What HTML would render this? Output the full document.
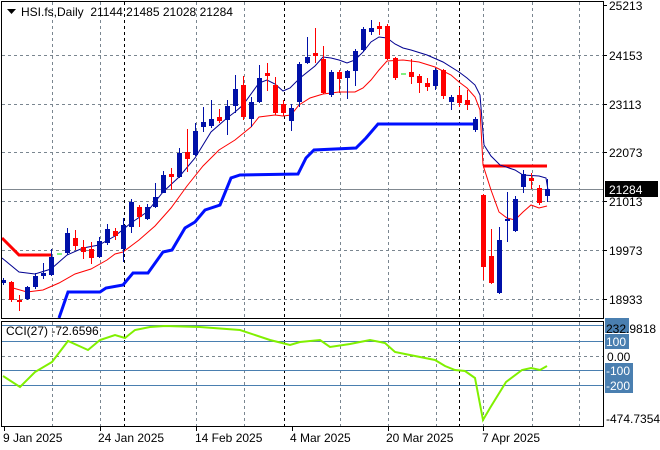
<!DOCTYPE html>
<html><head><meta charset="utf-8"><style>
html,body{margin:0;padding:0;background:#fff;width:660px;height:450px;overflow:hidden}
svg{display:block;font-family:"Liberation Sans",sans-serif}
</style></head><body>
<svg width="660" height="450" viewBox="0 0 660 450" xmlns="http://www.w3.org/2000/svg">
<g stroke="#7a8690" stroke-width="1" stroke-dasharray="3,3" fill="none">
<path d="M2 55.5H603M2 104.5H603M2 152.5H603M2 201.5H603M2 250.5H603M2 299.5H603"/>
<path d="M52.5 2V318M100.5 2V318M196.5 2V318M244.5 2V318M340.5 2V318M388.5 2V318M436.5 2V318M483.5 2V318M532.5 2V318M579.5 2V318"/>
<path d="M52.5 322V426M100.5 322V426M196.5 322V426M244.5 322V426M340.5 322V426M388.5 322V426M436.5 322V426M483.5 322V426M532.5 322V426M579.5 322V426"/>
<path d="M2 356.5H603"/>
</g>
<g stroke="#000" stroke-dasharray="3,3"><path d="M124.5 2V318M284.5 2V318M459.5 2V318M124.5 322V426M284.5 322V426M459.5 322V426"/></g>
<path d="M2 189.5H604" stroke="#808890"/>
<polyline fill="none" stroke="#ff0000" stroke-width="3" points="2,238 19,255 51,255"/>
<polyline fill="none" stroke="#ff0000" stroke-width="3" points="483,166 547,166"/>
<polyline fill="none" stroke="#0010ff" stroke-width="3" points="59,318 68,292 100,292 106,288 123,285 133,273 148,273 163,252 172,250 185,228 195,222 205,210 220,205 231,178 240,175 298,174 306,158 314,150 356,148 366,138 378,124 475,124"/>
<path d="M57 254H62M401 74H406" stroke="#00e000"/>
<polyline fill="none" stroke="#000090" stroke-width="1" points="2,258 19,272 35,274 51,269 67,255 83,248 99,245 115,236 131,223 147,212 163,192 179,177 195,158 211,132 227,118 235,112 243,105 259,83 267,80 275,84 283,91 290,88 300,78 315,66 323,57 331,58 339,60 347,63 355,60 363,52 371,42 379,37 387,38 395,44 403,48 411,50 427,55 443,62 459,72 467,78 475,85 480,95 484,145 491,156 500,165 515,170 523,175 539,176 546,178 548,190"/>
<polyline fill="none" stroke="#ff0000" stroke-width="1" points="13,288 27,292 43,290 59,283 75,274 91,269 107,260 115,254 123,252 139,240 155,226 171,208 187,186 203,166 219,150 235,140 251,127 259,117 275,115 283,116 291,115 299,105 310,98 323,94 339,92 355,92 363,88 371,80 379,70 387,61 403,60 419,62 435,67 451,75 459,82 467,88 475,97 480,110 483,165 491,190 499,212 507,218 515,220 523,212 531,205 539,208 547,206"/>
<g fill="#0010a8" stroke="#0010a8">
<path fill="none" d="M3.5 278V285M27.5 286V300M35.5 273V289M43.5 263V279M51.5 249V276M67.5 228V255M99.5 237V258M107.5 224V245M123.5 218V262M131.5 199V233M147.5 204V220M155.5 183V208M163.5 171V193M179.5 148V178M195.5 123V156M203.5 107V132M211.5 100V128M227.5 100V135M235.5 75V113M251.5 97V127M259.5 65V103M291.5 104V131M299.5 62V107M307.5 37V64M331.5 70V97M347.5 70V99M355.5 49V86M363.5 27V52M371.5 20V35M435.5 68V90M451.5 95V110M475.5 117V132M499.5 227V294M507.5 192V242M515.5 196V232M523.5 170V193M547.5 179V202"/>
<g stroke="none">
<rect x="1" y="280" width="5" height="3"/><rect x="25" y="287" width="5" height="12"/><rect x="33" y="276" width="5" height="11"/><rect x="41" y="273" width="5" height="3"/><rect x="49" y="257" width="5" height="18"/><rect x="65" y="233" width="5" height="20"/><rect x="97" y="241" width="5" height="16"/><rect x="105" y="229" width="5" height="14"/><rect x="121" y="225" width="5" height="24"/><rect x="129" y="202" width="5" height="25"/><rect x="145" y="207" width="5" height="12"/><rect x="153" y="197" width="5" height="10"/><rect x="161" y="175" width="5" height="18"/><rect x="177" y="153" width="5" height="24"/><rect x="193" y="131" width="5" height="24"/><rect x="201" y="122" width="5" height="5"/><rect x="209" y="119" width="5" height="7"/><rect x="225" y="106" width="5" height="14"/><rect x="233" y="89" width="5" height="17"/><rect x="249" y="102" width="5" height="17"/><rect x="257" y="78" width="5" height="24"/><rect x="289" y="108" width="5" height="13"/><rect x="297" y="64" width="5" height="38"/><rect x="305" y="57" width="5" height="6"/><rect x="329" y="72" width="5" height="23"/><rect x="345" y="71" width="5" height="7"/><rect x="353" y="51" width="5" height="20"/><rect x="361" y="29" width="5" height="21"/><rect x="369" y="28" width="5" height="4"/><rect x="433" y="70" width="5" height="16"/><rect x="449" y="97" width="5" height="5"/><rect x="473" y="119" width="5" height="11"/><rect x="497" y="240" width="5" height="53"/><rect x="505" y="219" width="5" height="2"/><rect x="513" y="199" width="5" height="32"/><rect x="521" y="174" width="5" height="13"/><rect x="545" y="189" width="5" height="7"/>
</g></g>
<g fill="#ff0000" stroke="#ff0000">
<path fill="none" d="M11.5 281V302M19.5 295V311M75.5 230V250M83.5 240V259M91.5 242V264M115.5 228V240M139.5 205V227M171.5 168V190M187.5 129V172M219.5 109V123M243.5 76V120M267.5 63V91M275.5 77V115M283.5 100V116M315.5 28V63M323.5 46V94M339.5 70V93M379.5 22V35M387.5 24V60M395.5 57V80M411.5 59V84M419.5 74V93M427.5 78V91M443.5 69V99M459.5 87V107M467.5 90V110M483.5 194V280M491.5 229V284M531.5 173V189M539.5 185V205"/>
<g stroke="none">
<rect x="9" y="282" width="5" height="18"/><rect x="17" y="300" width="5" height="2"/><rect x="73" y="238" width="5" height="8"/><rect x="81" y="247" width="5" height="5"/><rect x="89" y="249" width="5" height="9"/><rect x="113" y="231" width="5" height="5"/><rect x="137" y="207" width="5" height="10"/><rect x="169" y="174" width="5" height="3"/><rect x="185" y="152" width="5" height="7"/><rect x="217" y="117" width="5" height="4"/><rect x="241" y="85" width="5" height="32"/><rect x="265" y="73" width="5" height="3"/><rect x="273" y="85" width="5" height="28"/><rect x="281" y="104" width="5" height="9"/><rect x="313" y="53" width="5" height="3"/><rect x="321" y="59" width="5" height="34"/><rect x="337" y="72" width="5" height="7"/><rect x="377" y="26" width="5" height="3"/><rect x="385" y="26" width="5" height="33"/><rect x="393" y="58" width="5" height="20"/><rect x="409" y="72" width="5" height="5"/><rect x="417" y="76" width="5" height="7"/><rect x="425" y="83" width="5" height="4"/><rect x="441" y="70" width="5" height="26"/><rect x="457" y="95" width="5" height="8"/><rect x="465" y="100" width="5" height="5"/><rect x="481" y="195" width="5" height="72"/><rect x="489" y="256" width="5" height="27"/><rect x="529" y="178" width="5" height="3"/><rect x="537" y="188" width="5" height="15"/>
</g></g>
<path d="M2 325.5H603M2 341.5H603M2 370.5H603M2 385.5H603" stroke="#4a7fb0"/>
<polyline fill="none" stroke="#80f000" stroke-width="2" points="3,376 20,387 35,372 52,362 68,341 88,350 100,340 115,335 125,338 135,330 150,327 165,326 200,327 240,330 270,340 290,345 300,342 320,340 330,347 350,344 370,340 385,343 395,352 410,355 435,360 445,366 455,370 465,371 475,378 483,420 490,408 506,382 522,370 531,368 540,370 547,366"/>
<rect x="1.5" y="1.5" width="602" height="317" fill="none" stroke="#000"/>
<rect x="1.5" y="321.5" width="602" height="105" fill="none" stroke="#000"/>
<path d="M7 9H16L11.5 14Z" fill="#000"/>
<text x="21" y="16" font-size="12" fill="#000" xml:space="preserve" style="white-space:pre">HSI.fs,Daily  21144 21485 21028 21284</text>
<text x="6" y="335" font-size="12" fill="#000">CCI(27) -72.6596</text>
<g font-size="12" fill="#000">
<text x="609" y="10">25213</text><text x="609" y="60">24153</text><text x="609" y="109">23113</text><text x="609" y="157">22073</text><text x="609" y="206">21013</text><text x="609" y="255">19973</text><text x="609" y="304">18933</text>
</g>
<path d="M603 5.5H607M603 55.5H607M603 104.5H607M603 152.5H607M603 201.5H607M603 250.5H607M603 299.5H607" stroke="#000"/>
<rect x="605" y="181" width="53" height="16" fill="#000"/>
<text x="609" y="194" font-size="12" fill="#fff">21284</text>
<g fill="#4a7fb0"><rect x="605" y="318" width="24" height="15"/><rect x="605" y="334" width="24" height="15"/><rect x="605" y="363" width="28" height="15"/><rect x="605" y="378" width="28" height="15"/></g>
<g font-size="12" fill="#fff"><text x="606" y="346">100</text><text x="606" y="375">-100</text><text x="606" y="390">-200</text></g>
<g font-size="12" fill="#000"><text x="606" y="333">232.9818</text><text x="607" y="361">0.00</text><text x="606" y="423">-474.7354</text></g>
<path d="M4.5 427V431M100.5 427V431M196.5 427V431M292.5 427V431M388.5 427V431M483.5 427V431" stroke="#000"/>
<g font-size="12" fill="#000"><text x="3" y="442">9 Jan 2025</text><text x="98" y="442">24 Jan 2025</text><text x="195" y="442">14 Feb 2025</text><text x="290" y="442">4 Mar 2025</text><text x="386" y="442">20 Mar 2025</text><text x="482" y="442">7 Apr 2025</text></g>
</svg>
</body></html>
